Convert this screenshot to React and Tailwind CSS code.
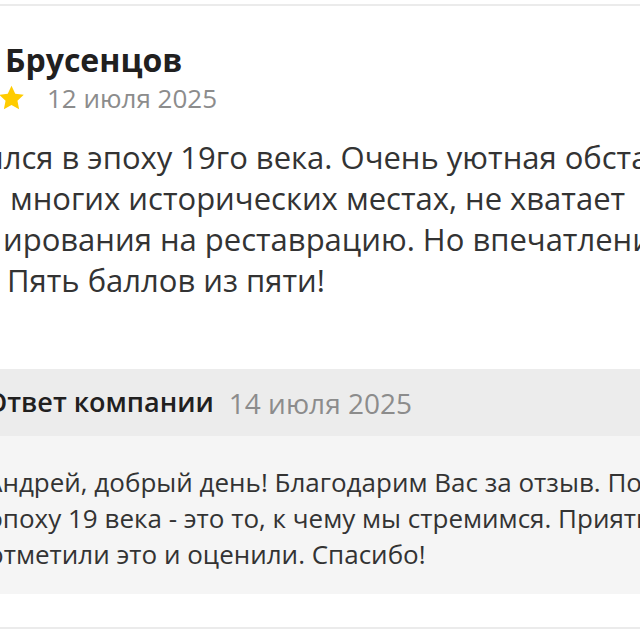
export default function App() {
  const font = { fontFamily: '"Open Sans", "Noto Sans", sans-serif' };

  return (
    <div className="w-[640px] h-[640px] overflow-hidden bg-white" style={font}>
      <div className="mt-[4px] h-[2px] bg-[#ebebeb]" />

      <div className="pl-[5px] pt-[35px]">
        <div className="text-[32px] leading-[38px] font-bold text-[#21201f]">Брусенцов</div>
        <div className="flex items-center mt-[4px] h-[30px]">
          <svg width="31" height="31" viewBox="0 0 24 24" className="ml-[-9px]">
            <path
              d="M12 2.2l2.9 6.1 6.6.8-4.9 4.6 1.3 6.6L12 17l-5.9 3.3 1.3-6.6-4.9-4.6 6.6-.8z"
              fill="#fc0"
            />
          </svg>
          <span className="ml-[20px] text-[26px] text-[#8c8c8c]">12 июля 2025</span>
        </div>
      </div>

      <div className="mt-[24px] text-[31px] leading-[41px] text-[#333] whitespace-nowrap">
        <div className="ml-[-16px]">ился в эпоху 19го века. Очень уютная обстановка</div>
        <div className="ml-[10px]">многих исторических местах, не хватает</div>
        <div className="ml-[3px]">ирования на реставрацию. Но впечатления</div>
        <div className="ml-[7px]">Пять баллов из пяти!</div>
      </div>

      <div className="mt-[68px] h-[67px] bg-[#ececec] flex items-center whitespace-nowrap">
        <span className="ml-[-14px] text-[27px] font-semibold text-[#21201f]">Ответ компании</span>
        <span className="ml-[15px] text-[28px] text-[#8c8c8c]">14 июля 2025</span>
      </div>

      <div className="h-[158px] bg-[#f5f5f5] pt-[28px] text-[26px] leading-[36px] text-[#333] whitespace-nowrap">
        <div className="ml-[-14px]">Андрей, добрый день! Благодарим Вас за отзыв. Погружение</div>
        <div className="ml-[-10px]">эпоху 19 века - это то, к чему мы стремимся. Приятно, что</div>
        <div className="ml-[-12px]">отметили это и оценили. Спасибо!</div>
      </div>

      <div className="mt-[33px] h-[2px] bg-[#ebebeb]" />
    </div>
  );
}
